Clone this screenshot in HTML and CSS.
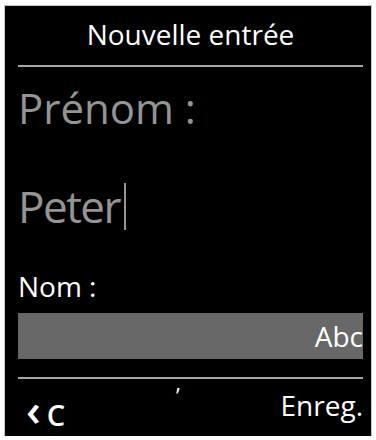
FILE: index.html
```html
<!DOCTYPE html>
<html lang="fr">
<head>
<meta charset="utf-8">
<title>Nouvelle entrée</title>
<link rel="stylesheet" href="styles.css">
</head>
<body>
<div class="screen">
  <div class="title">Nouvelle entrée</div>
  <div class="rule"></div>
  <div class="label-big">Prénom :</div>
  <div class="value-big">Peter<span class="cursor"></span></div>
  <div class="label">Nom :</div>
  <div class="field">Abc</div>
  <div class="rule rule-low"></div>
  <div class="footer">
    <span class="back"><span class="lt">‹</span><span class="c">C</span></span>
    <span class="tick">’</span>
    <span class="save">Enreg.</span>
  </div>
</div>
</body>
</html>
```

FILE: styles.css
```css
html, body {
  margin: 0;
  padding: 0;
  background: #ffffff;
}

.screen {
  margin: 6px 0 0 5px;
  width: 366px;
  height: 430px;
  box-sizing: border-box;
  background: #000000;
  box-shadow: 0 0 0 1px #c8c8c8;
  padding: 0 8px 0 13px;
  display: flex;
  flex-direction: column;
  font-family: "Open Sans", "DejaVu Sans", sans-serif;
  color: #ffffff;
}

.title {
  font-size: 28px;
  line-height: 56px;
  padding-bottom: 3px;
  text-align: center;
}

.rule {
  height: 2px;
  background: #a6a6a6;
  flex: none;
}

.rule-low {
  margin-top: 18px;
}

.label-big {
  font-size: 42px;
  line-height: 82px;
  color: #949494;
}

.value-big {
  font-size: 44px;
  line-height: 114px;
  letter-spacing: -1.5px;
  color: #949494;
  display: flex;
  align-items: center;
}

.cursor {
  display: inline-block;
  width: 2px;
  height: 47px;
  margin-left: 4px;
  background: #949494;
}

.label {
  font-size: 28px;
  line-height: 46px;
}

.field {
  margin-top: 4px;
  height: 46px;
  line-height: 46px;
  font-size: 28px;
  background: #686868;
  text-align: right;
}

.footer {
  display: flex;
  align-items: flex-start;
  height: 57px;
}

.back {
  display: flex;
  align-items: baseline;
  line-height: normal;
  padding-top: 0;
  margin-left: 8px;
}

.lt {
  font-size: 44px;
  font-weight: 600;
}

.c {
  font-size: 29px;
  font-weight: 600;
  margin-left: 6px;
}

.tick {
  font-size: 22px;
  line-height: 30px;
  padding-top: 1px;
  margin-left: 111px;
}

.save {
  margin-left: auto;
  font-size: 28px;
  line-height: 52px;
}
```
